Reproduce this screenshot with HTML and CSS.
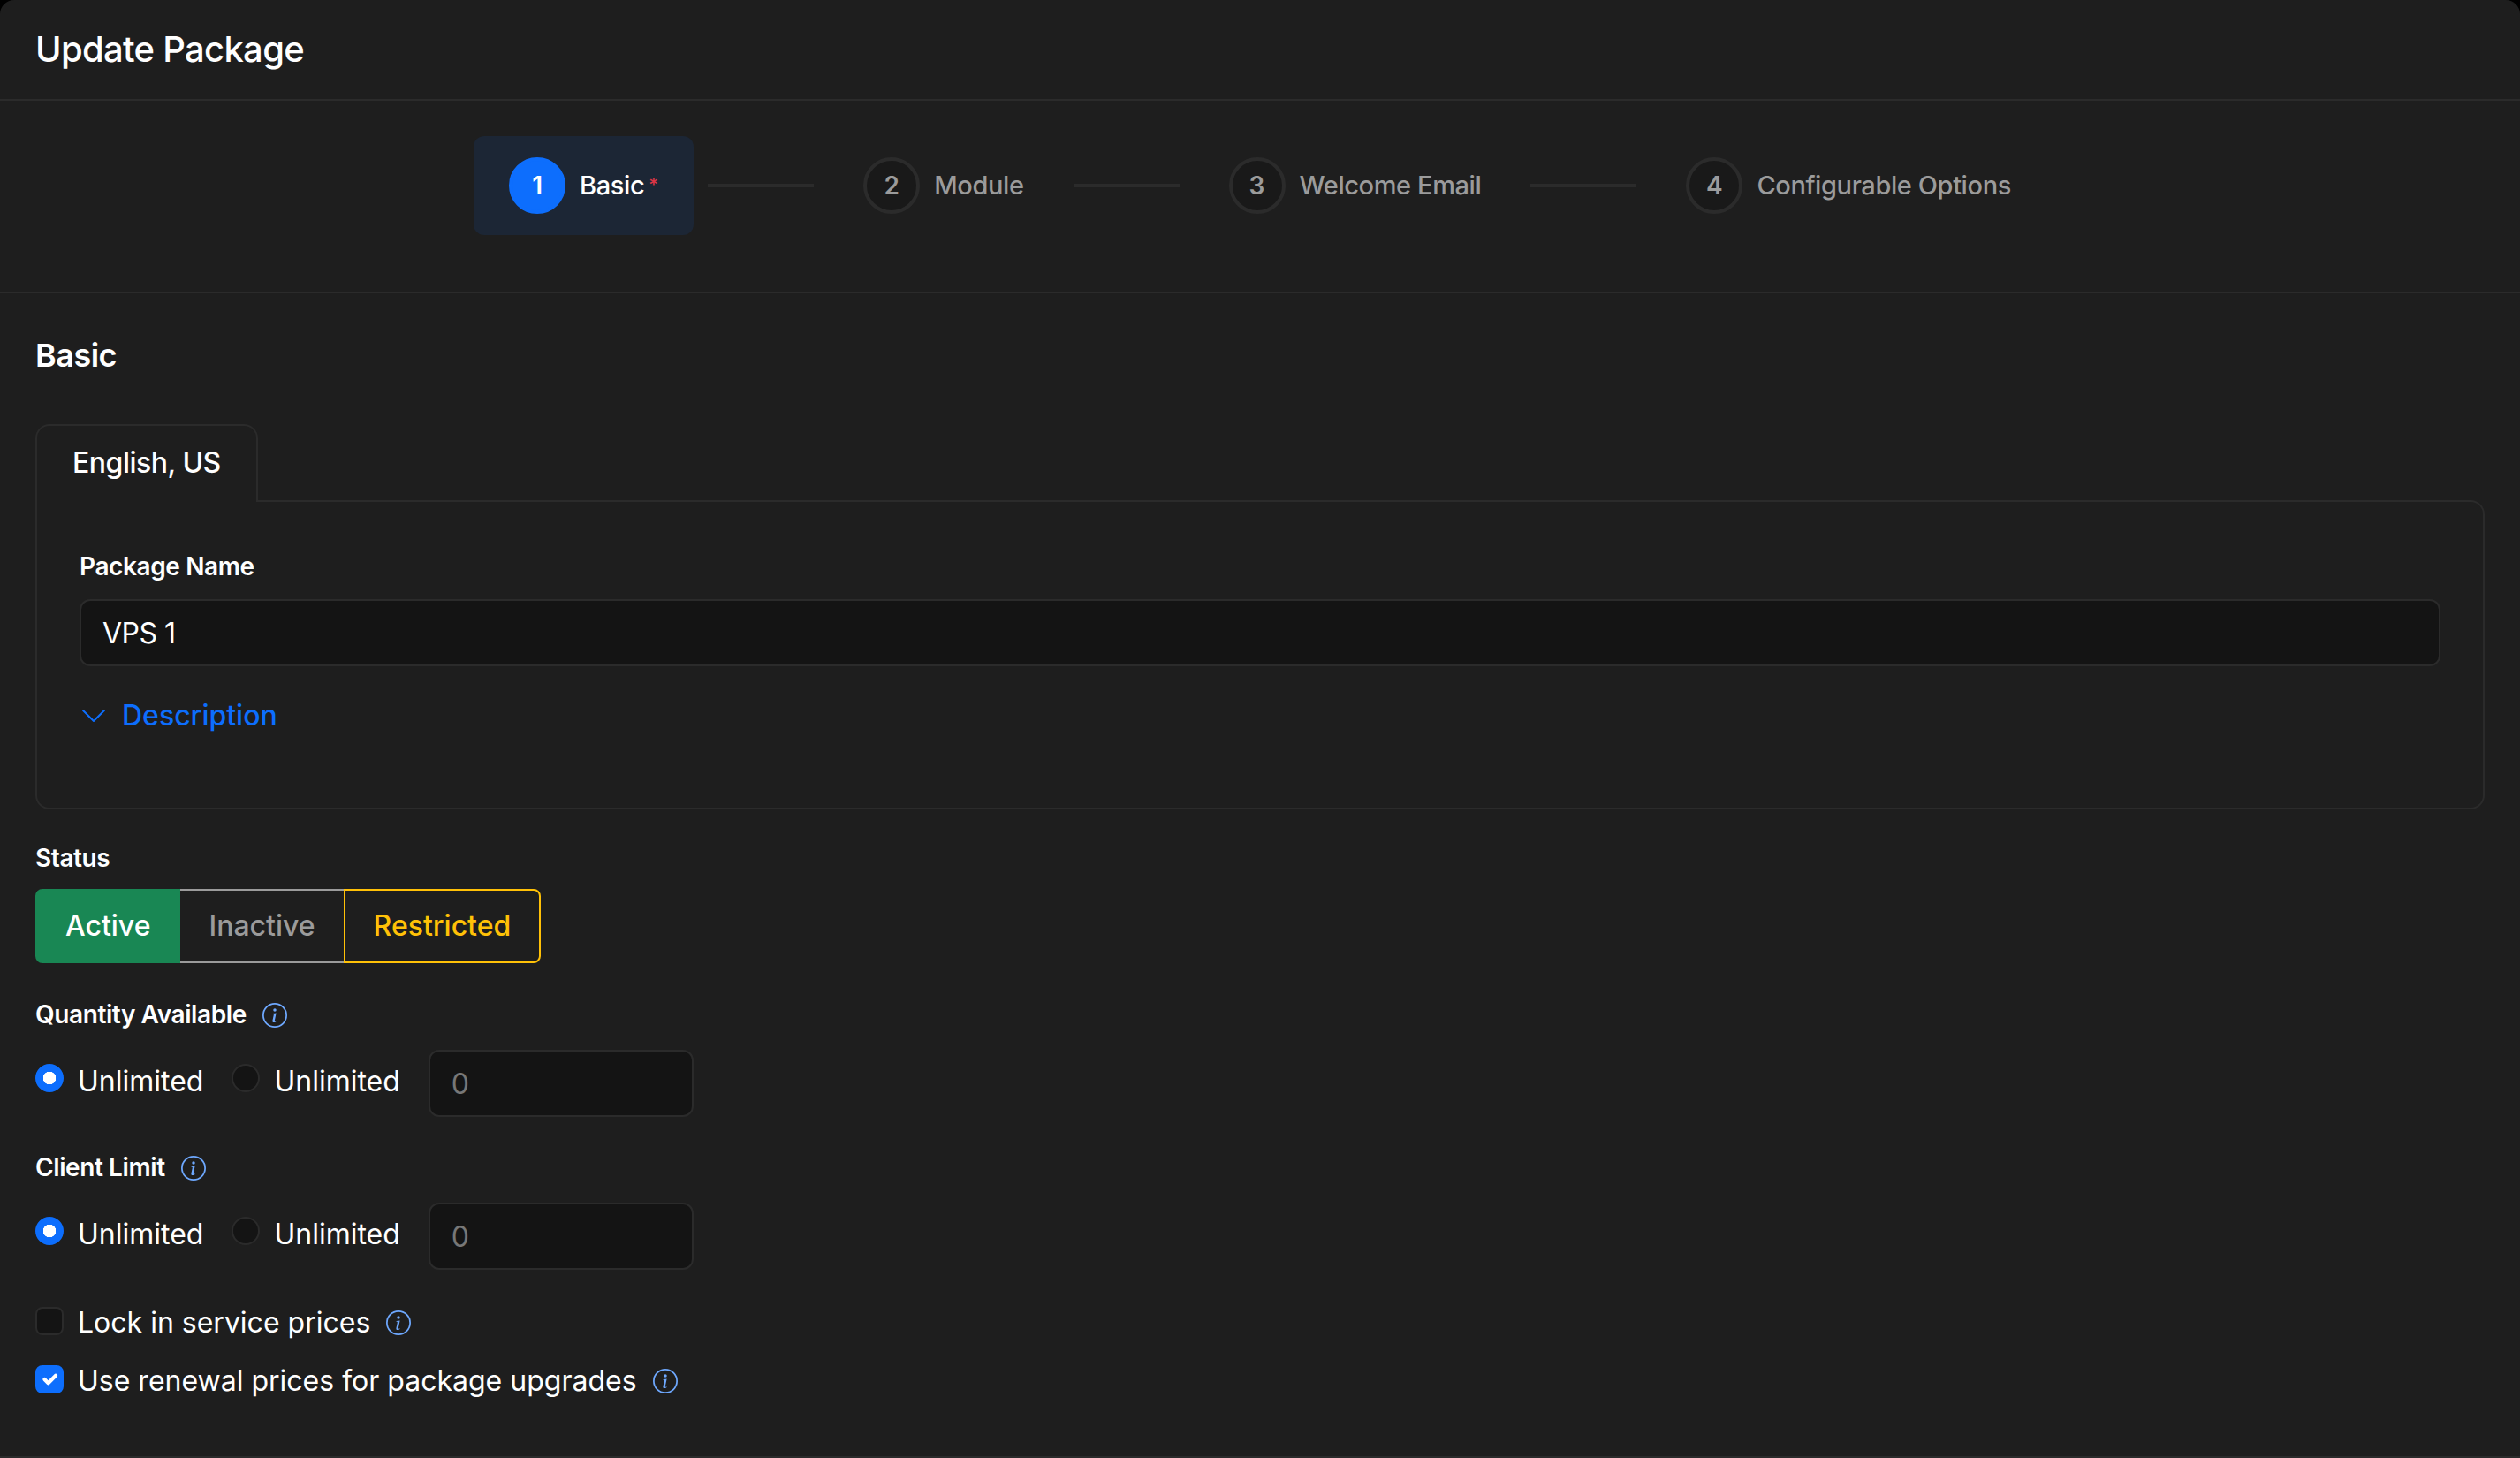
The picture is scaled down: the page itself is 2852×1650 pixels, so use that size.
FILE: index.html
```html
<!DOCTYPE html>
<html lang="en">
<head>
  <meta charset="UTF-8" />
  <meta name="viewport" content="width=device-width, initial-scale=1.0"/>
  <title>Update Package</title>
  <link rel="stylesheet" href="styles.css">
</head>

<body>
  <!-- Icon shared by all the hints -->
  <svg class="icon-defs" width="0" height="0">
    <symbol id="info" viewBox="0 0 16 16">
      <path d="M8 15A7 7 0 1 1 8 1a7 7 0 0 1 0 14m0 1A8 8 0 1 0 8 0a8 8 0 0 0 0 16"/>
      <path d="m8.930 6.588-2.290.287-.082.380.450.083c.294.070.352.176.288.469l-.738 3.468c-.194.897.105 1.319.808 1.319.545 0 1.178-.252 1.465-.598l.088-.416c-.200.176-.492.246-.686.246-.275 0-.375-.193-.304-.533zM9 4.500a1 1 0 1 1-2 0 1 1 0 0 1 2 0"/>
    </symbol>
  </svg>

  <div class="card">
    <div class="card-header">
      <h1 class="title">Update Package</h1>
    </div>

    <!-- Steps -->
    <div class="stepper">
      <div class="step active">
        <span class="step-number">1</span>
        <span class="step-label step-basic">Basic</span><span class="required">*</span>
      </div>
      <div class="step-line"></div>
      <div class="step">
        <span class="step-number">2</span>
        <span class="step-label step-module">Module</span>
      </div>
      <div class="step-line"></div>
      <div class="step">
        <span class="step-number">3</span>
        <span class="step-label step-email">Welcome Email</span>
      </div>
      <div class="step-line"></div>
      <div class="step">
        <span class="step-number">4</span>
        <span class="step-label step-options">Configurable Options</span>
      </div>
    </div>

    <form class="card-body">
      <h2 class="section-title">Basic</h2>

      <!-- Language tabs -->
      <div class="tabs">
        <a class="tab">English, US</a>
      </div>
      <div class="tab-content">
        <label class="label" for="name">Package Name</label>
        <input type="text" class="input" id="name" value="VPS 1">
        <a class="toggle">
          <svg class="chevron" viewBox="0 0 16 16"><path fill-rule="evenodd" d="M1.646 4.646a.5.5 0 0 1 .708 0L8 10.293l5.646-5.647a.5.5 0 0 1 .708.708l-6 6a.5.5 0 0 1-.708 0l-6-6a.5.5 0 0 1 0-.708"/></svg>
          <span>Description</span>
        </a>
      </div>

      <div class="label status-label">Status</div>
      <div class="btn-group">
        <button type="button" class="btn btn-active">Active</button>
        <button type="button" class="btn btn-inactive">Inactive</button>
        <button type="button" class="btn btn-restricted">Restricted</button>
      </div>

      <div class="group">
        <div class="label-row">
          <span class="label label-qty">Quantity Available</span>
          <svg class="info"><use href="#info"/></svg>
        </div>
        <div class="options">
          <label class="check"><input type="radio" class="radio" name="qty" checked><span class="unlimited">Unlimited</span></label>
          <label class="check"><input type="radio" class="radio" name="qty"><span class="unlimited">Unlimited</span></label>
          <input type="text" class="input input-small" placeholder="0">
        </div>
      </div>

      <div class="group">
        <div class="label-row">
          <span class="label label-client">Client Limit</span>
          <svg class="info"><use href="#info"/></svg>
        </div>
        <div class="options">
          <label class="check"><input type="radio" class="radio" name="client" checked><span class="unlimited">Unlimited</span></label>
          <label class="check"><input type="radio" class="radio" name="client"><span class="unlimited">Unlimited</span></label>
          <input type="text" class="input input-small" placeholder="0">
        </div>
      </div>

      <div class="checks">
        <div class="check">
          <span class="checkbox"></span>
          <span class="check-lock">Lock in service prices</span>
          <svg class="info"><use href="#info"/></svg>
        </div>
        <div class="check">
          <span class="checkbox checked"><svg viewBox="0 0 20 20"><path d="m6 10 3 3 6-6"/></svg></span>
          <span class="check-renewal">Use renewal prices for package upgrades</span>
          <svg class="info"><use href="#info"/></svg>
        </div>
      </div>
    </form>
  </div>
</body>
</html>
```

FILE: styles.css
```css
* {
  box-sizing: border-box;
}

body {
  margin: 0;
  height: 1650px;
  background-color: #000;
  color: #fff;
  font-family: Inter, "Liberation Sans", sans-serif;
  font-size: 32px;
  line-height: 48px;
  overflow: hidden;
}

.icon-defs {
  position: absolute;
}

.card {
  height: 1650px;
  background-color: #1e1e1e;
  border-bottom: 2px solid #2b2b2b;
  border-radius: 16px 16px 0 0;
}

.card-header {
  height: 114px;
  padding: 32px 40px;
  border-bottom: 2px solid #2b2b2b;
}

.title {
  margin: 0;
  font-size: 40px;
  font-weight: 500;
  letter-spacing: -0.7px;
}

/* Stepper */
.stepper {
  display: flex;
  justify-content: center;
  align-items: flex-start;
  gap: 16px;
  height: 218px;
  padding-top: 40px;
  border-bottom: 2px solid #2b2b2b;
}

.step {
  display: flex;
  align-items: center;
  height: 112px;
  padding: 0 40px;
  border-radius: 12px;
  color: #9b9b9b;
  font-size: 29px;
  font-weight: 500;
  white-space: nowrap;
}

.step.active {
  background-color: #1c2635;
  color: #fff;
}

.step-number {
  width: 64px;
  height: 64px;
  margin-right: 16px;
  border: 4px solid #2b2b2b;
  border-radius: 50%;
  background-color: #191919;
  font-size: 28px;
  font-weight: 600;
  line-height: 56px;
  text-align: center;
}

.step.active .step-number {
  border-color: #0d6efd;
  background-color: #0d6efd;
}

.step-label {
  letter-spacing: -0.4px;
}

.required {
  margin-left: 5px;
  color: #dc3545;
  font-size: 21px;
}

.step-line {
  width: 120px;
  height: 4px;
  margin-top: 54px;
  background-color: #2b2b2b;
}

/* Form */
.card-body {
  padding: 46px 40px 0;
}

.section-title {
  margin: 0 0 54px;
  font-size: 36px;
  font-weight: 600;
  letter-spacing: -0.5px;
}

.tabs {
  display: flex;
}

.tab {
  height: 88px;
  margin-bottom: -2px;
  padding: 18px 40px 0;
  border: 2px solid #2b2b2b;
  border-bottom: 0;
  border-radius: 16px 16px 0 0;
  background-color: #1e1e1e;
  font-weight: 500;
  letter-spacing: -0.5px;
  z-index: 1;
}

.tab-content {
  height: 350px;
  padding: 52px 48px 0;
  border: 2px solid #2b2b2b;
  border-radius: 0 16px 16px 16px;
}

.label {
  display: block;
  font-size: 28px;
  font-weight: 600;
  line-height: 42px;
  letter-spacing: -0.4px;
}

.input {
  display: block;
  width: 100%;
  height: 76px;
  margin: 16px 0 0;
  padding: 0 24px;
  border: 2px solid #2b2b2b;
  border-radius: 12px;
  background-color: #141414;
  color: #fff;
  font: inherit;
  letter-spacing: -0.5px;
}

.input::placeholder {
  color: #777;
}

.toggle {
  display: flex;
  align-items: center;
  gap: 16px;
  margin-top: 32px;
  color: #0d6efd;
  font-weight: 500;
}

.chevron {
  width: 32px;
  height: 32px;
  fill: currentColor;
}

/* Status buttons */
.status-label {
  margin: 34px 0 14px;
}

.btn-group {
  display: flex;
}

.btn {
  height: 84px;
  padding: 0 32px;
  border: 2px solid #9b9b9b;
  background: none;
  color: #9b9b9b;
  font: inherit;
  font-weight: 500;
}

.btn-active {
  border-color: #198754;
  border-radius: 8px 0 0 8px;
  background-color: #198754;
  color: #fff;
  z-index: 1;
}

.btn-inactive {
  margin-left: -2px;
  border-left-color: #198754;
}

.btn-restricted {
  margin-left: -2px;
  border-color: #ffc107;
  border-radius: 0 8px 8px 0;
  color: #ffc107;
}

/* Limits */
.group {
  height: 173px;
}

.btn-group {
  margin-bottom: 37px;
}

.label-row {
  display: flex;
  align-items: center;
  height: 42px;
}

.info {
  width: 28px;
  height: 28px;
  margin-left: 18px;
  fill: #6ea8fe;
}

.label-row .info {
  position: relative;
  top: 1px;
}

.options {
  display: flex;
  align-items: flex-start;
  gap: 32px;
  margin-top: 19px;
}

.options .check {
  margin-top: 12px;
}

.check {
  display: flex;
  align-items: center;
  height: 48px;
}

.radio {
  appearance: none;
  width: 32px;
  height: 32px;
  margin: -8px 16px 0 0;
  border: 2px solid #2b2b2b;
  border-radius: 50%;
  background-color: #141414;
}

.radio:checked {
  border-color: #0d6efd;
  background: radial-gradient(circle, #fff 7px, #0d6efd 7.500px);
}

.input-small {
  width: 300px;
  margin: 0;
}

.checks {
  display: flex;
  flex-direction: column;
  gap: 18px;
}

.checkbox {
  width: 32px;
  height: 32px;
  margin: -4px 16px 0 0;
  border: 2px solid #2b2b2b;
  border-radius: 8px;
  background-color: #141414;
}

.checkbox.checked {
  border-color: #0d6efd;
  background-color: #0d6efd;
}

.checkbox svg {
  display: block;
  fill: none;
  stroke: #fff;
  stroke-width: 3;
  stroke-linecap: round;
  stroke-linejoin: round;
}
```
